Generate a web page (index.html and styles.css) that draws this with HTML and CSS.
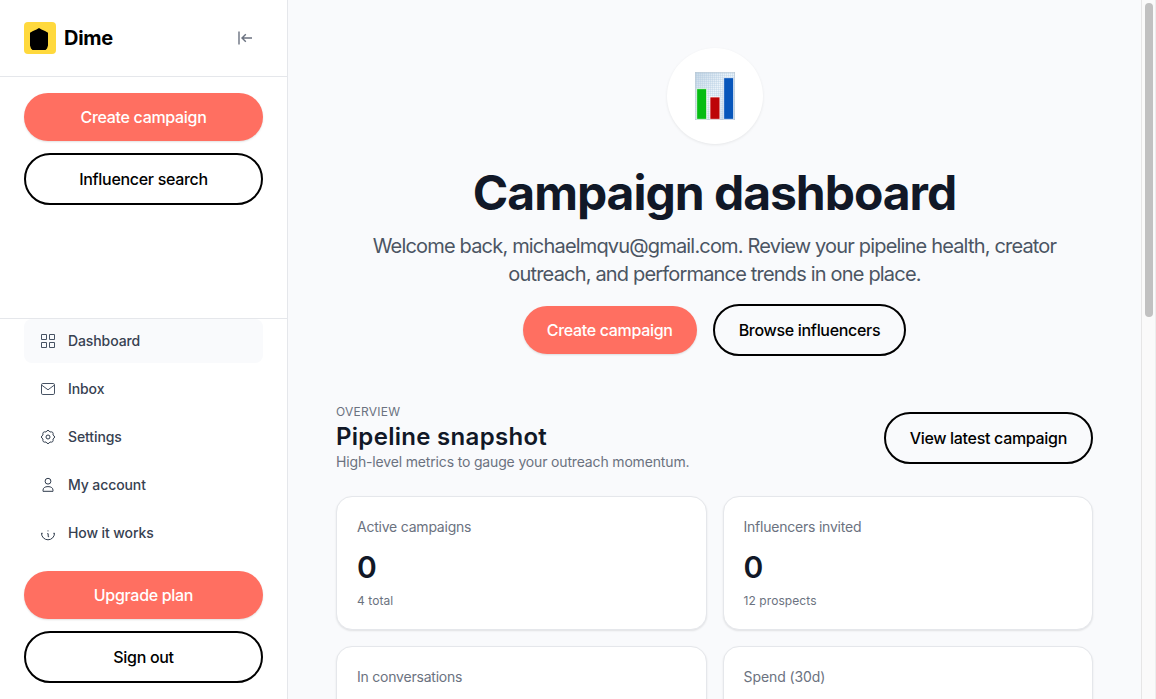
FILE: index.html
```html
<!DOCTYPE html>
<html lang="en">
<head>
<meta charset="utf-8">
<title>Dime</title>
<link rel="stylesheet" href="styles.css">
</head>
<body>
<div class="app">
  <aside class="sidebar">
    <header class="brand">
      <svg class="logo" width="32" height="32" viewBox="0 0 32 32"><rect width="32" height="32" rx="4" fill="#ffd93d"/><path d="M15 6l2.500 1.500L21 9l3 1.800V23.500l-1 3L21.500 28h-13L7 26.500l-1-3V10.800L9 9l3.500-1.500z"/></svg>
      <span class="brand-name">Dime</span>
      <svg class="collapse" width="16" height="16" viewBox="0 0 16 16" fill="none" stroke="#6b7280" stroke-width="1.400"><path d="M2 1.500v13M15 8H5M8.800 4.300L5 8l3.800 3.700"/></svg>
    </header>
    <div class="actions">
      <button class="btn primary">Create campaign</button>
      <button class="btn outline">Influencer search</button>
    </div>
    <nav class="nav">
      <a class="item active"><svg class="icon" viewBox="0 0 16 16"><path d="M1.500 1.500h5v5h-5zM9.500 1.500h5v5h-5zM1.500 9.500h5v5h-5zM9.500 9.500h5v5h-5z"/></svg>Dashboard</a>
      <a class="item"><svg class="icon" viewBox="0 0 16 16"><rect x="1.500" y="2.500" width="13" height="11" rx="1.300"/><path d="M1.800 4.200L8 8.800l6.200-4.600"/></svg>Inbox</a>
      <a class="item"><svg class="icon dark" viewBox="-8 -8 16 16"><path d="M4.990-2.070Q8.200 0 4.990 2.070Q5.800 5.800 2.070 4.990Q0 8.200-2.070 4.990Q-5.800 5.800-4.990 2.070Q-8.200 0-4.990-2.070Q-5.800-5.800-2.070-4.990Q0-8.200 2.070-4.990Q5.800-5.800 4.990-2.070Z"/><circle r="2"/></svg>Settings</a>
      <a class="item"><svg class="icon dark" viewBox="0 0 16 16"><circle cx="8" cy="4.200" r="2.900"/><path d="M3 14.300v-1c0-2.400 1.800-3.700 5-3.700s5 1.300 5 3.700v1z"/></svg>My account</a>
      <a class="item"><svg class="icon dark" viewBox="0 0 16 16"><path d="M1.500 8.300a6.500 6.500 0 0 0 13 0M1.300 8.300h1.400M13.300 8.300h1.400M7.200 8.700h1v3h.9M7.500 5.900h1"/></svg>How it works</a>
    </nav>
    <footer class="side-footer">
      <button class="btn primary">Upgrade plan</button>
      <button class="btn outline">Sign out</button>
    </footer>
  </aside>
  <main class="main">
    <section class="hero">
      <div class="hero-icon">
        <svg width="42" height="50" viewBox="0 0 42 50">
          <defs>
            <linearGradient id="paper" x1="0" y1="0" x2="1" y2="1"><stop offset="0" stop-color="#c8d8e6"/><stop offset=".45" stop-color="#edf5fb"/><stop offset="1" stop-color="#c9dae8"/></linearGradient>
            <pattern id="grid" width="2" height="2" patternUnits="userSpaceOnUse"><path d="M0 .5h2M.5 0v2" stroke="#a9c6dd" stroke-width=".3"/></pattern>
          </defs>
          <rect x="1" y="1" width="40" height="48" fill="url(#paper)"/>
          <rect x="1.300" y="1.300" width="39.400" height="47.400" fill="url(#grid)" stroke="#b8c6d2" stroke-width=".6"/>
          <g stroke="#fff" stroke-width=".7"><path d="M2.700 48.300V17.700h9.900v30.600z" fill="#06bd13"/><path d="M16 48.300V26h9.900v22.300z" fill="#bd0407"/><path d="M29.700 48.300V6.700h9.900v41.600z" fill="#0756bb"/></g>
        </svg>
      </div>
      <h1>Campaign dashboard</h1>
      <p class="lead">Welcome back, michaelmqvu@gmail.com. Review your pipeline health, creator<br>outreach, and performance trends in one place.</p>
      <div class="hero-actions">
        <button class="btn primary">Create campaign</button>
        <button class="btn outline">Browse influencers</button>
      </div>
    </section>
    <section class="overview">
      <div class="section-head">
        <div>
          <div class="eyebrow">OVERVIEW</div>
          <h2>Pipeline snapshot</h2>
          <p class="sub">High-level metrics to gauge your outreach momentum.</p>
        </div>
        <button class="btn outline">View latest campaign</button>
      </div>
      <div class="cards">
        <article class="card"><span class="label">Active campaigns</span><strong>0</strong><small>4 total</small></article>
        <article class="card"><span class="label">Influencers invited</span><strong>0</strong><small>12 prospects</small></article>
        <article class="card"><span class="label">In conversations</span></article>
        <article class="card"><span class="label spend">Spend (30d)</span></article>
      </div>
    </section>
  </main>
  <div class="scroll-track"><div class="scroll-thumb"></div></div>
</div>
</body>
</html>
```
FILE: styles.css
```css
* { box-sizing: border-box; }
body { margin: 0; overflow: hidden; font-family: Inter, "Liberation Sans", sans-serif; color: #111827; -webkit-font-smoothing: antialiased; }
h1, h2, p { margin: 0; }
.app { display: flex; width: 1156px; height: 699px; overflow: hidden; background: #f9fafc; }
.sidebar { display: flex; flex-direction: column; width: 288px; flex: none; background: #fff; border-right: 1px solid #e5e7eb; }
.brand { display: flex; align-items: center; height: 77px; padding: 0 34px 0 24px; border-bottom: 1px solid #e5e7eb; }
.brand-name { margin-left: 8px; font-size: 20px; line-height: 28px; font-weight: 700; letter-spacing: -0.3px; color: #000; }
.collapse { margin-left: auto; }
.actions { display: flex; flex-direction: column; gap: 12px; padding: 16px 24px; }
.btn { display: flex; align-items: center; justify-content: center; flex: none; border-radius: 999px; font: 500 16px/24px Inter, "Liberation Sans", sans-serif; letter-spacing: -0.31px; white-space: nowrap; }
.primary { height: 48px; padding: 0 24px; border: 0; background: #ff6f61; color: #fff; box-shadow: 0 1px 2px rgba(0,0,0,.12); }
.outline { height: 52px; padding: 0 24px; border: 2px solid #000; background: transparent; color: #000; }
.nav { display: flex; flex-direction: column; gap: 4px; margin-top: auto; padding: 0 24px; border-top: 1px solid #e5e7eb; }
.item { display: flex; align-items: center; gap: 12px; height: 44px; padding: 0 16px; border-radius: 8px; font-size: 14px; line-height: 20px; font-weight: 500; letter-spacing: -0.1px; color: #374151; }
.active { background: #f9fafc; }
.icon { width: 16px; height: 16px; fill: none; stroke: #465263; stroke-width: 1; }
.dark { stroke: #2f3b4c; }
.side-footer { display: flex; flex-direction: column; gap: 12px; padding: 16px 24px; }
.main { display: flex; flex-direction: column; gap: 48px; width: 853px; flex: none; padding: 48px; overflow: hidden; }
.hero { display: flex; flex-direction: column; align-items: center; text-align: center; }
.hero-icon { display: flex; align-items: center; justify-content: center; width: 96px; height: 96px; border-radius: 50%; background: #fff; box-shadow: 0 1px 3px rgba(0,0,0,.08); }
h1 { margin-top: 24px; font-size: 48px; line-height: 50px; font-weight: 700; letter-spacing: -1.03px; white-space: nowrap; color: #111827; }
.lead { margin-top: 14px; font-size: 20px; line-height: 28px; letter-spacing: -0.82px; white-space: nowrap; color: #4b5563; }
.hero-actions { display: flex; align-items: center; gap: 16px; margin-top: 16px; }
.section-head { display: flex; align-items: center; justify-content: space-between; }
.eyebrow { font-size: 12px; line-height: 16px; letter-spacing: 0.25px; color: #6b7280; }
h2 { padding-top: 1px; font-size: 24px; line-height: 31px; font-weight: 600; letter-spacing: 0.3px; }
.sub { font-size: 14px; line-height: 20px; letter-spacing: -0.16px; color: #6b7280; }
.cards { display: grid; grid-template-columns: 1fr 1fr; gap: 16px; margin-top: 24px; }
.card { display: flex; flex-direction: column; height: 134px; padding: 20px; border: 1px solid #e5e7eb; border-radius: 16px; background: #fff; box-shadow: 0 1px 2px rgba(0,0,0,.1); }
.label { font-size: 14px; line-height: 20px; letter-spacing: -0.22px; color: #6b7280; }
.spend { letter-spacing: -0.08px; }
.card strong { margin-top: 12px; font-size: 30px; line-height: 36px; font-weight: 600; }
.card small { margin-top: 8px; font-size: 12px; line-height: 16px; letter-spacing: 0.08px; color: #6b7280; }
.scroll-track { width: 15px; flex: none; padding: 3px 2px 0 3px; background: #fafafa; border-left: 1px solid #e6e6e6; border-right: 1px solid #ededed; }
.scroll-thumb { width: 8px; height: 314px; border-radius: 4px; background: #c1c1c1; }
```
